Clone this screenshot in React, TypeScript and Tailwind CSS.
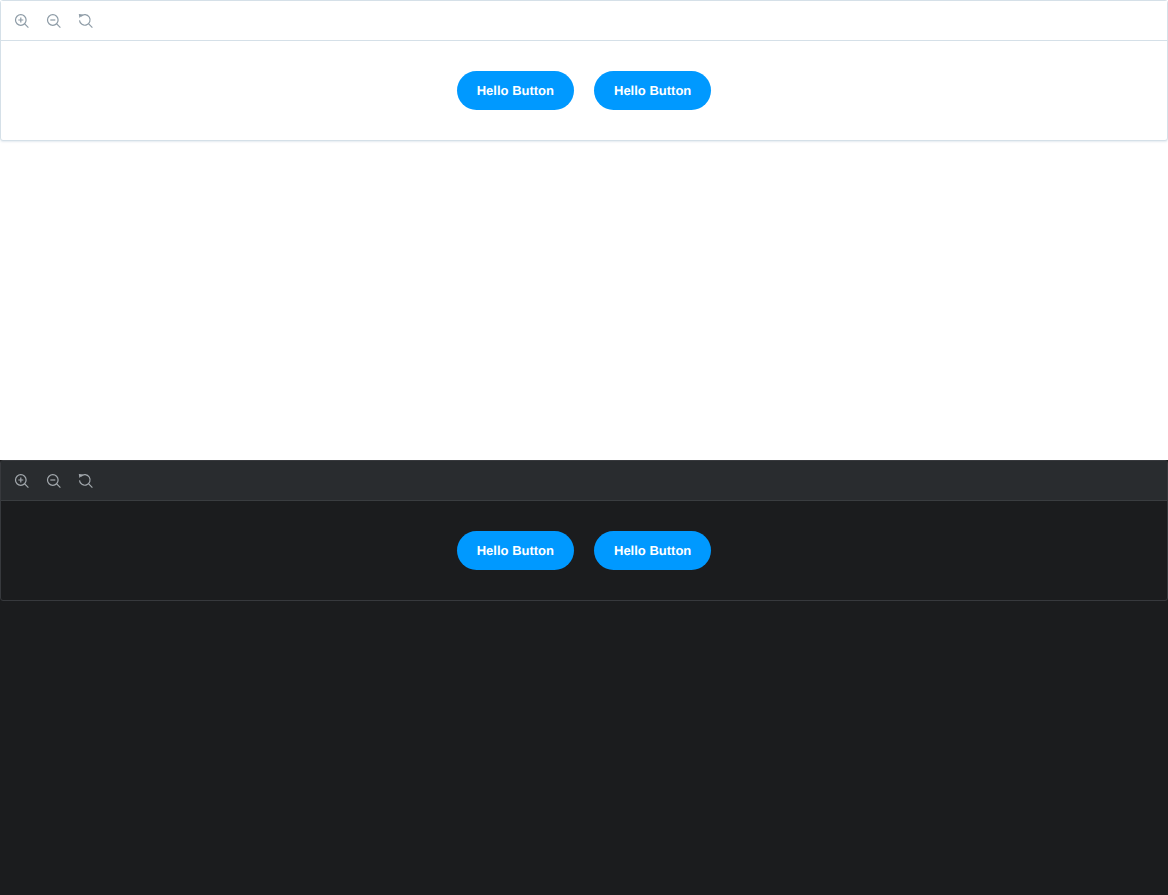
import React from "react";

const Lens: React.FC<{ children?: React.ReactNode }> = ({ children }) => (
    <svg width="16" height="16" viewBox="0 0 16 16" fill="none" stroke="currentColor" strokeWidth="1.2" className="block">
        <circle cx="6.8" cy="7" r="5.3" />
        <path d="M10.7 10.9L14.4 14.6" />
        {children}
    </svg>
);

const ZoomIn = () => (
    <Lens>
        <path d="M4.3 7H9.3M6.8 4.5V9.5" />
    </Lens>
);

const ZoomOut = () => (
    <Lens>
        <path d="M4.3 7H9.3" />
    </Lens>
);

const Reset = () => (
    <svg width="16" height="16" viewBox="0 0 16 16" fill="none" stroke="currentColor" strokeWidth="1.2" className="block">
        <path d="M2.9 3.3A5.3 5.3 0 1 1 1.5 7.4" />
        <path d="M10.7 10.9L14.4 14.6" />
        <path d="M0.8 1L4.9 1.6L1.4 5.1Z" fill="currentColor" stroke="none" />
    </svg>
);

const Demo: React.FC<{ dark?: boolean }> = ({ dark }) => {
    return (
        <section className={dark ? "h-[435px] bg-[#1b1c1e]" : "h-[460px] bg-white"}>
            <div className={dark
                ? "rounded-[3px] border border-[#37393d] bg-[#1b1c1e]"
                : "rounded-[3px] border border-[#d5e0e8] bg-white shadow-[0_1px_2px_rgba(120,150,180,0.2)]"}>
                <div className={dark
                    ? "flex h-10 items-center gap-4 border-b border-[#3a3d40] bg-[#292c2f] pl-[13px] text-[#a3a9ae]"
                    : "flex h-10 items-center gap-4 border-b border-[#d5e0e8] bg-white pl-[13px] text-[#8d9ba6]"}>
                    <ZoomIn />
                    <ZoomOut />
                    <Reset />
                </div>
                <div className="flex h-[99px] items-center justify-center gap-5 pb-px">
                    <button className="h-[39px] rounded-[20px] bg-[#0099ff] px-5 pt-[2px] text-[13px] font-bold text-white [text-rendering:geometricPrecision]">Hello Button</button>
                    <button className="h-[39px] rounded-[20px] bg-[#0099ff] px-5 pt-[2px] text-[13px] font-bold text-white [text-rendering:geometricPrecision]">Hello Button</button>
                </div>
            </div>
        </section>
    );
};

const App: React.FC = () => {
    return (
        <div className="font-['Liberation_Sans',Arial,sans-serif]">
            <Demo />
            <Demo dark />
        </div>
    );
};

export default App;
